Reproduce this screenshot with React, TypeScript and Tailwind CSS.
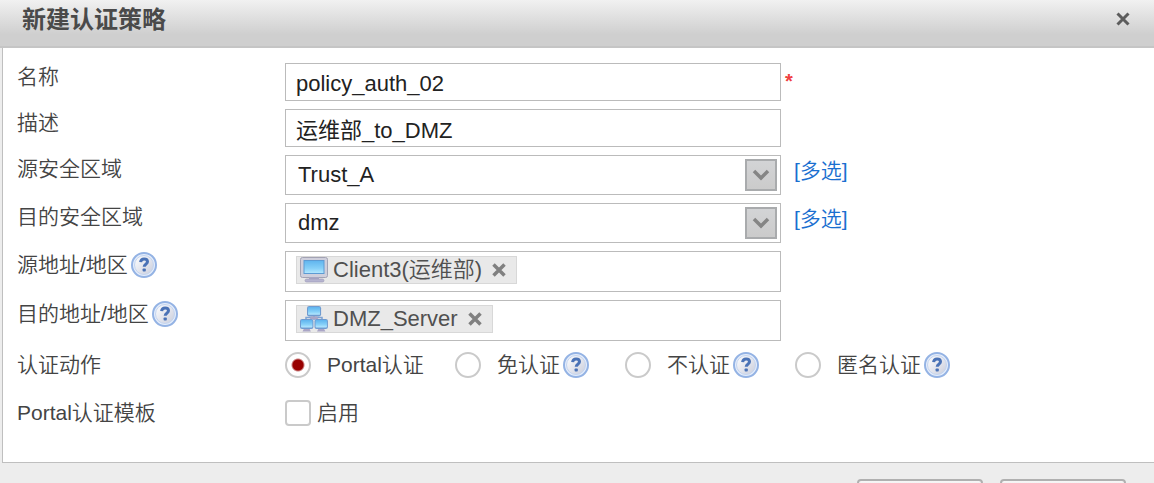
import { ReactNode, useState } from "react"

const HelpIcon = ({ title }: { title: string }) => (
  <button type="button" aria-label={title} className="shrink-0">
    <svg width="26" height="26" viewBox="0 0 26 26">
      <defs>
        <linearGradient id="helpFill" x1="0" y1="0" x2="1" y2="1">
          <stop offset="0" stopColor="#ffffff" />
          <stop offset="0.5" stopColor="#e4e6ee" />
          <stop offset="1" stopColor="#c9cddb" />
        </linearGradient>
      </defs>
      <circle cx="13" cy="13" r="12" fill="#e6eefb" stroke="#94b3e4" strokeWidth="2" />
      <circle cx="13" cy="13" r="9.5" fill="url(#helpFill)" stroke="#c3d4f0" strokeWidth="1" />
      <path d="M9.6 10.2C9.8 7.8 11.2 6.9 13.1 6.9C15.2 6.9 16.5 8 16.5 9.7C16.5 12 13.3 12.2 13.2 14.8" fill="none" stroke="#4a72b6" strokeWidth="3" />
      <rect x="11.6" y="16.4" width="3.2" height="3.2" rx="0.8" fill="#4a72b6" />
    </svg>
  </button>
)

const Screen = () => (
  <>
    <rect width="16" height="12" rx="2.5" fill="#6f9bd0" />
    <rect x="1.2" y="1.2" width="13.6" height="8.8" rx="1" fill="url(#screenFill)" />
    <path d="M4.5 12H11.5L13 15H3Z" fill="#aaa5c6" />
  </>
)

const ComputerIcon = () => (
  <svg width="28" height="26" viewBox="0 0 28 26" className="shrink-0" aria-hidden="true">
    <defs>
      <linearGradient id="screenFill" x1="0" y1="0" x2="0" y2="1">
        <stop offset="0" stopColor="#5fb4ee" />
        <stop offset="0.6" stopColor="#86d0f8" />
        <stop offset="1" stopColor="#b5e8ff" />
      </linearGradient>
    </defs>
    <rect x="0.5" y="0.5" width="27" height="20" rx="2" fill="#cfcfdc" stroke="#a3a3b4" />
    <rect x="4" y="3.5" width="20" height="13" fill="url(#screenFill)" stroke="#5d9bd3" />
    <rect x="9" y="20" width="10" height="3" fill="#a7a7c4" />
    <rect x="5" y="22" width="19" height="3" rx="1.5" fill="#b6b4d0" stroke="#9a98b6" strokeWidth="0.6" />
  </svg>
)

const NetworkIcon = () => (
  <svg width="28" height="26" viewBox="0 0 28 26" className="shrink-0" aria-hidden="true">
    <path d="M14 9V14M6 14V11.5H22V14" fill="none" stroke="#7fa3d2" strokeWidth="1.5" />
    <g transform="translate(7 0) scale(0.88)"><Screen /></g>
    <g transform="translate(0 13) scale(0.84)"><Screen /></g>
    <g transform="translate(14.5 13) scale(0.84)"><Screen /></g>
  </svg>
)

const CrossIcon = ({ color, width }: { color: string, width: number }) => (
  <svg width="14" height="14" viewBox="0 0 14 14" aria-hidden="true">
    <path d="M1.5 1.5L12.5 12.5M12.5 1.5L1.5 12.5" stroke={color} strokeWidth={width} />
  </svg>
)

const Row = ({ label, htmlFor, help, children }: { label: string, htmlFor: string, help?: boolean, children: ReactNode }) => (
  <div className="flex items-start">
    <div className="flex w-[268px] h-7 shrink-0 items-center gap-[3px]">
      <label htmlFor={htmlFor}>{label}</label>
      {help && <HelpIcon title={`${label}帮助`} />}
    </div>
    {children}
  </div>
)

const SelectField = ({ id, options }: { id: string, options: string[] }) => (
  <>
    <div className="relative w-[496px]">
      <select id={id} className="block w-full h-10 appearance-none rounded-none border border-[#bbb] bg-white px-3 text-[22px] text-[#222]">
        {options.map((item) => <option key={item}>{item}</option>)}
      </select>
      <span className="absolute top-1 right-1 flex size-8 items-center justify-center border-2 border-[#a9abad] bg-linear-to-b from-[#d3d4d6] to-[#cbcbcb] pointer-events-none">
        <svg width="18" height="12" viewBox="0 0 18 12" aria-hidden="true">
          <path d="M2 2L9 9L16 2" fill="none" stroke="#858585" strokeWidth="3.5" />
        </svg>
      </span>
    </div>
    <a href="#" className="ml-[13px] pt-0.5 text-[#1a6fd0]">[多选]</a>
  </>
)

const TagField = ({ id, icon, text }: { id: string, icon: ReactNode, text: string }) => {
  const [show, setShow] = useState(true)
  return (
    <div className="flex w-[496px] h-[41px] items-start border border-[#bbb] bg-white px-2.5 pt-1">
      {show && (
        <span className="flex shrink-0 h-7 items-center border border-[#d8d8d8] bg-[#e9e9e9] pl-[3px] pr-2.5 text-[22px] leading-7 text-[#505050]">
          {icon}
          <span className="ml-[5px]">{text}</span>
          <button type="button" aria-label="删除" className="ml-2.5" onClick={() => setShow(false)}>
            <CrossIcon color="#808080" width={3.5} />
          </button>
        </span>
      )}
      <input id={id} className="min-w-0 flex-1 outline-none" />
    </div>
  )
}

const dataAction = [
  { value: "portal", text: "Portal认证", help: false },
  { value: "exempt", text: "免认证", help: true },
  { value: "none", text: "不认证", help: true },
  { value: "anonymous", text: "匿名认证", help: true },
]

const App = () => {
  const [action, setAction] = useState("portal")

  return (
    <div className="flex h-screen flex-col overflow-hidden bg-[#ededed] font-['Liberation_Sans','Noto_Sans_CJK_SC',sans-serif] font-[350] text-[21px] leading-7 text-[#444]">
      <header className="flex h-12 shrink-0 items-start justify-between border-b-2 border-[#c5c5c5] bg-linear-to-b from-[#f1f1f1] to-[#cfcfcf] to-75% pt-1.5 pl-[22px] pr-6">
        <h1 className="font-bold text-2xl leading-7 text-[#4a4a4a]">新建认证策略</h1>
        <button type="button" aria-label="关闭" className="mt-1.5">
          <CrossIcon color="#5c5c5c" width={3} />
        </button>
      </header>
      <form className="ml-0.5 flex shrink-0 flex-col gap-2 border-b border-l border-[#bfbfbf] bg-white pt-[15px] pb-[33px] pl-3.5">
        <Row label="名称" htmlFor="name">
          <input id="name" type="text" defaultValue="policy_auth_02" className="w-[496px] h-[38px] border border-[#bbb] bg-white px-2.5 pt-1 text-[22px] text-[#222]" />
          <span className="ml-1 pt-1 font-bold text-[20px] text-[#f04040]">*</span>
        </Row>
        <Row label="描述" htmlFor="desc">
          <input id="desc" type="text" defaultValue="运维部_to_DMZ" className="w-[496px] h-[38px] border border-[#bbb] bg-white px-2.5 font-normal text-[22px] text-[#222]" />
        </Row>
        <Row label="源安全区域" htmlFor="srcZone">
          <SelectField id="srcZone" options={["Trust_A"]} />
        </Row>
        <Row label="目的安全区域" htmlFor="dstZone">
          <SelectField id="dstZone" options={["dmz"]} />
        </Row>
        <Row label="源地址/地区" htmlFor="srcAddr" help>
          <TagField id="srcAddr" icon={<ComputerIcon />} text="Client3(运维部)" />
        </Row>
        <Row label="目的地址/地区" htmlFor="dstAddr" help>
          <TagField id="dstAddr" icon={<NetworkIcon />} text="DMZ_Server" />
        </Row>
        <div className="flex flex-col gap-4">
          <div role="radiogroup" aria-labelledby="action-label" className="flex h-8 items-center">
            <span id="action-label" className="w-[268px] shrink-0">认证动作</span>
            <div className="grid grid-cols-[170px_170px_170px_auto]">
              {dataAction.map((item) => (
                <div key={item.value} className="flex items-center gap-[3px]">
                  <label className="flex items-center gap-4">
                    <input
                      type="radio"
                      name="action"
                      checked={action === item.value}
                      onChange={() => setAction(item.value)}
                      className="size-[26px] appearance-none rounded-full border-2 border-[#cacaca] bg-white bg-center checked:bg-[radial-gradient(circle,#980000_5px,#ffffff_7px)]"
                    />
                    {item.text}
                  </label>
                  {item.help && <HelpIcon title={`${item.text}帮助`} />}
                </div>
              ))}
            </div>
          </div>
          <div className="flex h-8 items-center">
            <label htmlFor="template" className="w-[268px] shrink-0">Portal认证模板</label>
            <label className="flex items-center gap-1.5">
              <input id="template" type="checkbox" className="size-[26px] appearance-none rounded-sm border-2 border-[#cacaca] bg-white checked:bg-[#980000]" />
              启用
            </label>
          </div>
        </div>
      </form>
      <footer className="flex shrink-0 justify-end gap-[17px] pt-4 pr-7">
        <button type="button" aria-label="确定" className="w-[126px] h-9 rounded-sm border-2 border-[#b0b0b0] bg-linear-to-b from-[#f6f6f6] to-[#dcdcdc]" />
        <button type="button" aria-label="取消" className="w-[126px] h-9 rounded-sm border-2 border-[#b0b0b0] bg-linear-to-b from-[#f6f6f6] to-[#dcdcdc]" />
      </footer>
    </div>
  )
}

export default App
